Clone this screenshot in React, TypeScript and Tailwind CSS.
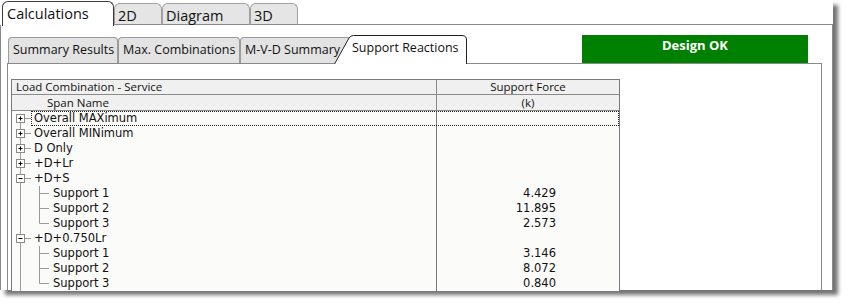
import React from "react";

type Row = { label: string; level: 0 | 1; value?: string; state?: "plus" | "minus"; last?: boolean; first?: boolean };

const rows: Row[] = [
  { label: "Overall MAXimum", level: 0, state: "plus", first: true },
  { label: "Overall MINimum", level: 0, state: "plus" },
  { label: "D Only", level: 0, state: "plus" },
  { label: "+D+Lr", level: 0, state: "plus" },
  { label: "+D+S", level: 0, state: "minus" },
  { label: "Support 1", level: 1, value: "4.429" },
  { label: "Support 2", level: 1, value: "11.895" },
  { label: "Support 3", level: 1, value: "2.573", last: true },
  { label: "+D+0.750Lr", level: 0, state: "minus" },
  { label: "Support 1", level: 1, value: "3.146" },
  { label: "Support 2", level: 1, value: "8.072" },
  { label: "Support 3", level: 1, value: "0.840", last: true },
];

const ui = { fontFamily: '"Open Sans", "Noto Sans", sans-serif' };
const cell = { fontFamily: '"DejaVu Sans", Verdana, sans-serif' };

function TreeLines({ row }: { row: Row }) {
  const line = "#9a9a9a";
  return (
    <svg width={row.level === 0 ? 21 : 40} height={15} className="shrink-0">
      <line x1={8.5} x2={8.5} y1={row.first ? 7.5 : 0} y2={15} stroke={line} />
      {row.level === 0 && (
        <>
          <line x1={12.5} x2={19} y1={7.5} y2={7.5} stroke={line} />
          <rect x={4.5} y={3.5} width={8} height={8} fill="#fff" stroke="#8a8a8a" />
          <line x1={6.5} x2={10.5} y1={7.5} y2={7.5} stroke="#000" />
          {row.state === "plus" && <line x1={8.5} x2={8.5} y1={5.5} y2={9.5} stroke="#000" />}
        </>
      )}
      {row.level === 1 && (
        <>
          <line x1={27.5} x2={27.5} y1={0} y2={row.last ? 7.5 : 15} stroke={line} />
          <line x1={27.5} x2={37} y1={7.5} y2={7.5} stroke={line} />
        </>
      )}
    </svg>
  );
}

function ActiveTabShape() {
  return (
    <svg width={134} height={29} className="absolute left-0 top-0">
      <path d="M0.5 29 L15 3 Q16.5 0.5 19.5 0.5 L128 0.5 Q132.5 0.5 132.5 5 L132.5 29" fill="#fff" stroke="#222" />
    </svg>
  );
}

export default function App() {
  return (
    <div className="w-[848px] h-[305px] bg-white overflow-hidden">
      <div className="w-[833px] h-[290px] bg-white flex flex-col shadow-[5px_5px_4px_rgba(0,0,0,0.55)]" style={ui}>
        <div className="h-[25px] flex items-end shrink-0">
          <div className="w-[2px] h-full" />
          <div className="w-[112px] h-[25px] bg-white border border-b-0 border-[#3a3a3a] rounded-t-[6px] pl-[4px] text-[14.5px] leading-[23px] text-[#111] relative z-10 -mb-px">
            Calculations
          </div>
          {[
            { t: "2D", w: "w-[48px]" },
            { t: "Diagram", w: "w-[88px]" },
            { t: "3D", w: "w-[48px]" },
          ].map((tab) => (
            <div
              key={tab.t}
              className={`${tab.w} h-[22px] bg-[#e5e5e5] border border-[#a0a0a0] border-b-[#8a8a8a] rounded-t-[6px] pl-[3px] text-[14.5px] leading-[23px] text-[#111]`}
            >
              {tab.t}
            </div>
          ))}
          <div className="flex-1 h-full border-b border-[#8a8a8a]" />
        </div>

        <div className="flex-1 flex flex-col border-l border-r border-[#8a8a8a] pt-[10px] pl-[6px] pr-[10px] min-h-0">
          <div className="h-[28px] flex items-end shrink-0 text-[12.5px] text-[#111]">
            <div className="ml-px w-[110px] h-[26px] bg-[#e3e3e3] border border-b-0 border-[#9a9a9a] rounded-t-[4px] pl-[4px] leading-[24px] whitespace-nowrap overflow-hidden">
              Summary Results
            </div>
            <div className="w-[122px] h-[26px] bg-[#e3e3e3] border border-b-0 border-[#9a9a9a] rounded-t-[4px] pl-[4px] leading-[24px] whitespace-nowrap overflow-hidden">
              Max. Combinations
            </div>
            <div className="w-[112px] h-[26px] bg-[#e3e3e3] border border-b-0 border-[#9a9a9a] rounded-t-[4px] pl-[4px] leading-[24px] whitespace-nowrap overflow-hidden">
              M-V-D Summary
            </div>
            <div className="relative -ml-[18px] w-[134px] h-[29px] -mb-px z-10 self-start">
              <ActiveTabShape />
              <span className="relative block pl-[18px] pt-[4px] leading-[18px] whitespace-nowrap">Support Reactions</span>
            </div>
            <div className="ml-auto mr-[14px] w-[226px] h-[28px] self-start bg-[#008000] text-white font-bold text-center text-[13px] leading-[19px] pt-px">
              Design OK
            </div>
          </div>

          <div className="flex-1 border border-b-0 border-[#8a8a8a] pt-[15px] pl-[3px] min-h-0">
            <div className="w-[609px] border border-b-0 border-[#7a7a7a] bg-[#fbfbf9] text-[11.5px] text-[#111]">
              <div className="flex h-[15px] bg-[#f0f0f0] border-b border-[#8a8a8a] leading-[14px] text-[11.5px] overflow-hidden" style={ui}>
                <div className="w-[425px] border-r border-[#8a8a8a] pl-[4px] whitespace-nowrap">Load Combination - Service</div>
                <div className="flex-1 text-center">Support Force</div>
              </div>
              <div className="flex h-[16px] bg-[#f0f0f0] border-b border-[#8a8a8a] leading-[15px] text-[11.5px] overflow-hidden" style={ui}>
                <div className="w-[425px] border-r border-[#8a8a8a] pl-[35px]">Span Name</div>
                <div className="flex-1 text-center">(k)</div>
              </div>
              {rows.map((row, i) => (
                <div key={i} className="flex h-[15px] relative leading-[15px]" style={cell}>
                  <div className="w-[425px] border-r border-[#7a7a7a] flex items-center whitespace-nowrap">
                    <TreeLines row={row} />
                    <span className="pl-px">{row.label}</span>
                  </div>
                  <div className="flex-1 text-right pr-[63px]">{row.value}</div>
                  {i === 0 && <div className="absolute left-[19px] right-0 top-0 bottom-0 border border-dotted border-[#222]" />}
                </div>
              ))}
            </div>
          </div>
        </div>
      </div>
    </div>
  );
}
